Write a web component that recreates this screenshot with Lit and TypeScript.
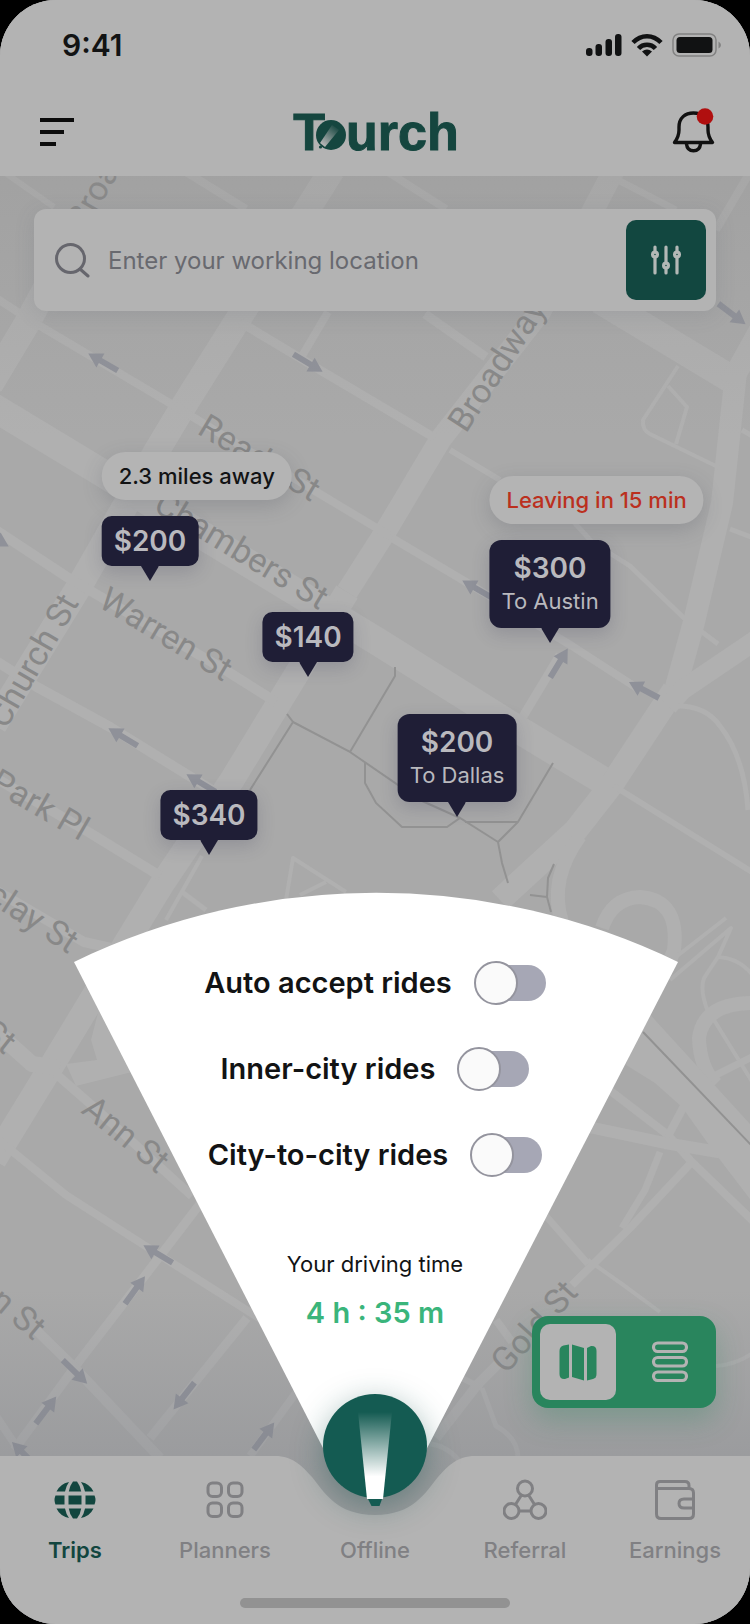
import { LitElement, html, svg, css, nothing } from "lit";
import { customElement, state } from "lit/decorators.js";

interface Pin {
  x: number;
  y: number;
  price: string;
  to?: string;
  note?: string;
  urgent?: boolean;
}

/* Positions are percentages of the map area. */
const PINS: Pin[] = [
  { x: 20, y: 31.64, price: "$200", note: "2.3 miles away" },
  { x: 41.07, y: 39.14, price: "$140" },
  { x: 73.34, y: 36.48, price: "$300", to: "To Austin", note: "Leaving in 15 min", urgent: true },
  { x: 60.94, y: 50.08, price: "$200", to: "To Dallas" },
  { x: 27.87, y: 53.05, price: "$340" },
];

/* Streets: [stroke width, path]. */
const STREETS: [number, string][] = [
  [26, "M332 170 L183 407 L156 452 L80 585 L-6 725"],
  [26, "M60 262 L26 325 L-10 385"],
  [22, "M614 170 L540 312 L440 440 L384 534 L347 592"],
  [25, "M347 592 L288 688 L232 780 L162 884 L112 966 L54 1062 L-6 1160"],
  [28, "M-10 405 L104 474 L210 540 L375 640 L506 722 L612 786"],
  [28, "M600 300 L736 382"],
  [22, "M736 372 L722 503 L694 622 L674 694"],
  [22, "M730 384 L760 330"],
  [24, "M674 690 L612 784 L576 830 L500 900"],
  [20, "M756 640 L682 690 L668 706"],
  [14, "M580 836 Q548 880 562 922"],
  [6, "M4 172 L54 207"],
  [8, "M186 172 L246 209"],
  [8, "M388 172 L446 209"],
  [7, "M614 178 L676 210"],
  [8, "M750 172 L716 230"],
  [8, "M-10 294 L30 320 L173 405 L320 494 L390 536"],
  [9, "M240 322 L325 373 L435 438"],
  [8, "M328 312 L302 356"],
  [9, "M425 314 L486 357"],
  [6, "M450 450 L500 480"],
  [8, "M392 538 L466 582 L572 646 L640 690"],
  [9, "M516 728 L560 655"],
  [5, "M572 520 L592 542 L630 566 L686 620 L718 644"],
  [4, "M678 366 L643 420 Q642 430 650 434 L720 468"],
  [4, "M668 386 L687 407 L676 444"],
  [5, "M742 430 L756 438"],
  [5, "M730 529 L756 539"],
  [10, "M-4 530 L67 577 L230 673 L276 702"],
  [10, "M-4 661 L37 687 L110 727 L212 790"],
  [10, "M-8 776 L90 833 L160 876"],
  [10, "M-8 888 L84 942 L120 950"],
  [16, "M-8 1028 L32 1064 L60 1068"],
  [9, "M56 1074 L95 1108 L192 1196"],
  [8, "M-4 1138 L66 1195 L147 1247 L270 1325"],
  [9, "M206 1196 L157 1260 L80 1360 L14 1450"],
  [10, "M36 1330 L73 1366 L160 1458"],
  [9, "M247 1318 L150 1438"],
  [8, "M298 1390 L250 1456"],
  [8, "M-4 1416 L24 1458"],
  [5, "M678 706 Q706 706 720 726 Q744 756 748 810"],
  [6, "M614 786 L752 872"],
  [14, "M602 928 Q612 898 640 897 Q680 900 674 950 L668 966"],
  [4, "M672 960 L726 918"],
  [4, "M670 980 L731 928 L718 957 L706 975 Q698 986 708 1012 L714 1020 L756 1088"],
  [4, "M718 957 Q742 958 756 980"],
  [14, "M756 1003 Q704 1002 699 1038 Q700 1068 716 1084"],
  [7, "M756 1055 L714 1076"],
  [8, "M608 1089 L668 1135 L690 1160 L756 1224"],
  [12, "M584 1126 L665 1143 L724 1153"],
  [8, "M684 1106 L668 1136"],
  [7, "M660 1152 L645 1190 L622 1228"],
  [8, "M690 1164 L630 1228 L572 1285"],
  [10, "M500 1362 L478 1384 L436 1438"],
  [7, "M546 1216 L588 1264"],
  [4, "M588 1260 L622 1284 L660 1312"],
  [8, "M496 1320 L512 1342"],
  [6, "M462 1378 L482 1388"],
  [5, "M482 1388 L496 1426 Q518 1438 518 1458"],
  [5, "M430 1444 Q448 1446 460 1462"],
  [4, "M716 1366 Q738 1364 754 1352"],
  [4, "M286 900 L293 858 L346 892 M300 895 L326 882"],
  [5, "M182 892 L206 910"],
  [4, "M202 856 L166 920"],
];

/* Wide carriageways, drawn as filled areas. */
const JUNCTIONS =
  "M640 1003 L655 1020 L760 1135 V1212 L714 1152 L682 1107 L655 1083 L626 1065 Z " +
  "M100 1005 L91 1040 L97 1060 L66 1064 L76 1086 L136 1071 L132 1040 Z";

const PATHWAYS =
  "M287 714 L293 722 L250 790 M293 722 L350 752 L395 676 V667 M350 752 L420 800 L460 818 " +
  "M365 763 V783 L376 803 L402 827 H447 L460 818 L498 842 L502 863 L508 883 " +
  "M498 842 L518 822 L553 763 M465 822 H518 M554 864 L548 878 L547 897 L551 912 M530 895 L547 897 " +
  "M643 1032 L752 1146";

/* One-way arrows: x, y, heading in degrees. */
const ARROWS: [number, number, number][] = [
  [103, 362, 210], [308, 363, 31], [732, 314, 37], [-6, 538, 30], [477, 589, 210],
  [559, 663, -59], [644, 690, 208], [123, 737, 211], [201, 783, 211], [158, 1254, 211],
  [135, 1290, -54], [75, 1372, 44], [46, 1410, -53], [184, 1396, 128], [264, 1436, -53],
  [24, 1454, 225],
];

/* Street names: x, y, heading, text. */
const NAMES: [number, number, number, string][] = [
  [85, 232, -60, "Broadway"], [466, 434, -57, "Broadway"], [196, 433, 31, "Reade St"],
  [152, 510, 31, "Chambers St"], [97, 606, 31, "Warren St"], [6, 730, -60, "Church St"],
  [-12, 788, 30, "Park Pl"], [-58, 872, 33, "Barclay St"], [-20, 1036, 38, "St"],
  [80, 1112, 39, "Ann St"], [-55, 1267, 40, "John St"], [506, 1375, -48, "Gold St"],
];

@customElement("city-map")
export class CityMap extends LitElement {
  static styles = css`
    :host { display: block; }
    svg { display: block; width: 100%; height: 100%; }
    .street { fill: none; stroke: #b0b0b0; stroke-linejoin: round; }
    .junction { fill: #b0b0b0; }
    .pathway { fill: none; stroke: #929292; stroke-width: 2; }
    .arrow { fill: #8f9199; }
    .name { font: 400 34px Roboto, sans-serif; fill: #888; }
  `;

  render() {
    return html`
      <svg viewBox="0 0 750 1624" preserveAspectRatio="xMidYMin slice" role="img" aria-label="Street map">
        <defs>
          <linearGradient id="top" x1="0" y1="0" x2="0" y2="1">
            <stop offset="0" stop-color="#8c8c8c" stop-opacity="0.25" />
            <stop offset="1" stop-color="#8c8c8c" stop-opacity="0" />
          </linearGradient>
          <linearGradient id="bottom" x1="0" y1="0" x2="0" y2="1">
            <stop offset="0" stop-color="#7d8087" stop-opacity="0" />
            <stop offset="1" stop-color="#7d8087" stop-opacity="0.35" />
          </linearGradient>
        </defs>
        <rect width="750" height="1624" fill="#a9a9a9" />
        ${STREETS.map(([w, d]) => svg`<path class="street" stroke-width=${w} d=${d} />`)}
        <path class="junction" d=${JUNCTIONS} />
        <path class="pathway" d=${PATHWAYS} />
        ${ARROWS.map(
          ([x, y, a]) => svg`<path class="arrow" transform="translate(${x} ${y}) rotate(${a})"
            d="M-17 -3 H3 V-8 L17 0 L3 8 V3 H-17 Z" />`,
        )}
        ${NAMES.map(
          ([x, y, a, t]) => svg`<text class="name" transform="translate(${x} ${y}) rotate(${a})">${t}</text>`,
        )}
        <rect y="176" width="750" height="260" fill="url(#top)" />
        <rect y="1290" width="750" height="180" fill="url(#bottom)" />
        <rect y="1470" width="750" height="154" fill="#7d8087" fill-opacity="0.35" />
      </svg>
    `;
  }
}

const signalIcon = html`
  <svg width="36" height="22" viewBox="0 0 36 22" fill="#111213">
    <rect x="0" y="14" width="6.500" height="8" rx="3" />
    <rect x="9.500" y="10" width="6.500" height="12" rx="3" />
    <rect x="19.500" y="5" width="6.500" height="17" rx="3" />
    <rect x="29" y="0" width="6.500" height="22" rx="3" />
  </svg>`;

const wifiIcon = html`
  <svg width="32" height="24" viewBox="0 0 32 24" fill="none" stroke="#111213" stroke-width="4.500">
    <path d="M2 9.500 C10 1 22 1 30 9.500" />
    <path d="M7.500 15.500 C12 10.500 20 10.500 24.500 15.500" />
    <path d="M16 23.500 L11 18.500 Q16 14.500 21 18.500 Z" fill="#111213" stroke="none" />
  </svg>`;

const batteryIcon = html`
  <svg width="50" height="24" viewBox="0 0 50 24">
    <rect x="1" y="1" width="43" height="22" rx="6" fill="none" stroke="#828282" stroke-width="1.500" />
    <rect x="4.500" y="4" width="36" height="16" rx="3.500" fill="#111213" />
    <path d="M46.500 8.500 Q49 10 49 12 Q49 14 46.500 15.500 Z" fill="#828282" />
  </svg>`;

const bellIcon = html`
  <svg class="bell" width="44" height="44" viewBox="0 0 44 44" fill="none" stroke="#111" stroke-width="3.400" stroke-linejoin="round" stroke-linecap="round">
    <path d="M2.500 32.500 C5.500 28.500 7 26 7 20 V17 C7 8 13 3 21.500 3 C30 3 36 8 36 17 V20 C36 26 37.500 28.500 40.500 32.500 Z" />
    <path d="M14.500 34 C15 38.500 17.500 40.800 21.500 40.800 C25.500 40.800 28 38.500 28.500 34" />
    <circle cx="33" cy="6.500" r="8.300" fill="#b00f0f" stroke="none" />
  </svg>`;

const logoDisc = html`
  <svg class="logo-disc" width="30" height="30" viewBox="0 0 30 30">
    <defs>
      <linearGradient id="ray" x1="5" y1="26" x2="21" y2="6" gradientUnits="userSpaceOnUse">
        <stop offset="0.100" stop-color="#b3b3b3" />
        <stop offset="0.900" stop-color="#b3b3b3" stop-opacity="0.100" />
      </linearGradient>
    </defs>
    <circle cx="15" cy="15" r="15" fill="#15463f" />
    <path d="M4 23 L16 5 L23 10 L9 27 Z" fill="url(#ray)" />
    <path d="M1 23 L7 28 L5 30 L0 28 Z" fill="#b3b3b3" />
    <circle cx="4.500" cy="27" r="1.600" fill="#15463f" />
  </svg>`;

const tripsIcon = html`
  <svg width="42" height="42" viewBox="0 0 42 42">
    <g fill="#12463f">
      <path d="M15 3 Q6 5 2.500 12.500 H11 Q12 7 15 3 Z" />
      <path d="M27 3 Q36 5 39.500 12.500 H31 Q30 7 27 3 Z" />
      <path d="M19 2.500 H23 Q26.500 7 27.200 12.500 H14.800 Q15.500 7 19 2.500 Z" />
      <path d="M1.500 16.500 H10.500 V25.500 H1.500 Q-0.500 21 1.500 16.500 Z" />
      <path d="M14.500 16.500 H27.500 V25.500 H14.500 Z" />
      <path d="M40.500 16.500 H31.500 V25.500 H40.500 Q42.500 21 40.500 16.500 Z" />
      <path d="M15 39 Q6 37 2.500 29.500 H11 Q12 35 15 39 Z" />
      <path d="M27 39 Q36 37 39.500 29.500 H31 Q30 35 27 39 Z" />
      <path d="M19 39.500 H23 Q26.500 35 27.200 29.500 H14.800 Q15.500 35 19 39.500 Z" />
    </g>
  </svg>`;

const plannersIcon = html`
  <svg width="42" height="42" viewBox="0 0 42 42" fill="none" stroke="#808083" stroke-width="3">
    <rect x="4" y="4" width="13.500" height="13.500" rx="4.500" />
    <rect x="24.500" y="4" width="13.500" height="13.500" rx="4.500" />
    <rect x="4" y="24" width="13.500" height="13.500" rx="4.500" />
    <rect x="24.500" y="24" width="13.500" height="13.500" rx="4.500" />
  </svg>`;

const referralIcon = html`
  <svg width="44" height="42" viewBox="0 0 44 42" fill="none" stroke="#808083" stroke-width="3">
    <circle cx="22" cy="9.500" r="7.500" />
    <circle cx="8.500" cy="32" r="7.500" />
    <circle cx="35.500" cy="32" r="7.500" />
    <path d="M18.500 16 L12.500 25.500 M25.500 16 L31.500 25.500 M16 32 H28" />
  </svg>`;

const earningsIcon = html`
  <svg width="42" height="42" viewBox="0 0 42 42" fill="none" stroke="#808083" stroke-width="3" stroke-linejoin="round">
    <path d="M2.500 9.500 V6 Q2.500 2.500 6 2.500 H31 Q35 2.500 35 6.500 V10" />
    <path d="M2.500 9.500 H35 Q39.500 9.500 39.500 14 V35 Q39.500 39.500 35 39.500 H7 Q2.500 39.500 2.500 35 Z" />
    <path d="M39.500 20 H30 Q25 20 25 24.500 Q25 29 30 29 H39.500" />
  </svg>`;

@customElement("app-root")
export class AppRoot extends LitElement {
  static styles = css`
    :host {
      display: block;
      background: #000;
      font-family: Inter, "Liberation Sans", sans-serif;
      color: #121314;
    }
    *, *::before, *::after { box-sizing: border-box; }
    button, input { font: inherit; color: inherit; margin: 0; padding: 0; border: 0; background: none; }
    button { cursor: pointer; display: grid; place-items: center; }
    a { color: inherit; text-decoration: none; }
    svg { display: block; flex: none; }

    .screen {
      position: relative;
      display: flex;
      flex-direction: column;
      min-height: 100vh;
      overflow: hidden;
      border-radius: 56px;
      background: #b3b3b3;
    }
    .backdrop { position: absolute; inset: 0; }

    .top { position: relative; background: #b3b3b3; }
    .status {
      display: flex;
      align-items: center;
      justify-content: space-between;
      height: 88px;
      padding: 2px 28px 0 62px;
    }
    .time { font-size: 30px; line-height: 36px; font-weight: 600; }
    .signals { display: flex; align-items: center; gap: 9px; }
    .toolbar {
      display: grid;
      grid-template-columns: 44px 1fr 44px;
      align-items: center;
      height: 88px;
      padding: 0 34px 0 40px;
    }
    .menu { justify-items: start; align-content: center; gap: 8px; height: 44px; }
    .bar { height: 4px; background: #0c0c0c; }
    .bar-long { width: 34px; }
    .bar-mid { width: 24px; }
    .bar-short { width: 16px; }
    .bell { overflow: visible; }
    .logo {
      display: flex;
      align-items: baseline;
      justify-content: center;
      margin: 0;
      padding-right: 4px;
      font: 700 52px/60px "Liberation Sans", Arial, sans-serif;
      color: #15463f;
      -webkit-text-stroke: 1px #15463f;
    }
    .logo-disc { margin-left: -9px; }

    .area {
      position: relative;
      flex: 1;
      display: flex;
      flex-direction: column;
      justify-content: space-between;
      padding: 33px 34px 48px;
    }
    .search {
      position: relative;
      z-index: 1;
      display: flex;
      align-items: center;
      gap: 18px;
      height: 102px;
      padding: 0 10px 0 20px;
      border-radius: 12px;
      background: #b3b3b3;
      box-shadow: 0 4px 20px rgba(90, 95, 110, 0.15);
    }
    .query { flex: 1; min-width: 0; height: 60px; outline: 0; font-size: 24px; }
    .query::placeholder { color: #68696f; opacity: 1; }
    .filter { width: 80px; height: 80px; border-radius: 10px; background: #124740; }

    .pin {
      position: absolute;
      display: flex;
      flex-direction: column;
      align-items: center;
      transform: translate(-50%, -100%);
    }
    .tag {
      position: relative;
      display: flex;
      flex-direction: column;
      align-items: center;
      justify-content: center;
      min-height: 50px;
      padding: 0 12px;
      border-radius: 10px;
      background: #1f1e36;
      color: #b9b9be;
      box-shadow: 0 6px 18px rgba(50, 52, 80, 0.2);
    }
    .tag-tall { min-height: 88px; border-radius: 12px; }
    .price { font-size: 28px; line-height: 34px; font-weight: 600; }
    .to { font-size: 22px; line-height: 32px; white-space: nowrap; }
    .tail { width: 18px; height: 15px; background: #1f1e36; clip-path: polygon(0 0, 100% 0, 50% 100%); }
    .note {
      position: absolute;
      left: 0;
      bottom: calc(100% + 16px);
      padding: 0 17px;
      border-radius: 24px;
      background: #b4b4b4;
      box-shadow: 0 6px 20px rgba(70, 72, 85, 0.22);
      font-size: 22px;
      line-height: 48px;
      font-weight: 500;
      white-space: nowrap;
    }
    .note-urgent { color: #bb301e; }

    .views {
      align-self: flex-end;
      display: flex;
      justify-content: space-between;
      width: 184px;
      padding: 8px;
      border-radius: 16px;
      background: #29855d;
      box-shadow: 0 12px 28px rgba(41, 133, 93, 0.3);
    }
    .view { width: 76px; height: 76px; border-radius: 10px; }
    .view-on { background: #b3b3b3; }

    .fan {
      position: absolute;
      z-index: 2;
      left: 50%;
      bottom: 127px;
      width: 604px;
      height: 604px;
      transform: translateX(-50%);
    }
    .fan-shape { position: absolute; inset: 0; overflow: visible; }
    .fan-body {
      position: relative;
      display: flex;
      flex-direction: column;
      align-items: center;
      padding-top: 68px;
    }
    .options { display: grid; justify-items: center; gap: 42px; margin-bottom: 71px; }
    .option { display: flex; align-items: center; gap: 22px; font-size: 29px; line-height: 44px; font-weight: 600; cursor: pointer; }
    .switch { appearance: none; position: relative; width: 72px; height: 44px; cursor: pointer; }
    .switch::before {
      content: "";
      position: absolute;
      inset: 4px 0 4px 8px;
      border-radius: 18px;
      background: #a6a7b5;
    }
    .switch::after {
      content: "";
      position: absolute;
      top: 0;
      left: 0;
      width: 44px;
      height: 44px;
      border: 2px solid #94949e;
      border-radius: 50%;
      background: #fafafa;
    }
    .switch:checked::before { inset: 4px 8px 4px 0; background: #3ab37c; }
    .switch:checked::after { left: 28px; }
    .caption { margin: 0; font-size: 22px; line-height: 32px; }
    .clock { margin: 15px 0 0; font-size: 29px; line-height: 36px; font-weight: 600; color: #3ab57b; }

    .nav { position: relative; height: 168px; }
    .nav-shape { position: absolute; inset: 0; display: flex; }
    .nav-side { flex: 1; background: #b3b3b3; }
    .tabs {
      position: relative;
      display: grid;
      grid-template-columns: repeat(5, 1fr);
      padding-top: 22px;
    }
    .tab {
      display: flex;
      flex-direction: column;
      align-items: center;
      justify-content: flex-end;
      gap: 14px;
      height: 87px;
      font-size: 22px;
      line-height: 30px;
      font-weight: 500;
      color: #808083;
    }
    .tab-on { color: #12463f; font-weight: 600; }
    .torch {
      position: absolute;
      z-index: 3;
      top: -62px;
      left: 50%;
      width: 104px;
      height: 104px;
      margin-left: -52px;
      border-radius: 50%;
      background: #145b52;
      box-shadow: 0 8px 32px rgba(20, 80, 75, 0.4);
    }
    .torch svg { overflow: visible; }
    .home {
      position: absolute;
      left: 50%;
      bottom: 16px;
      width: 270px;
      height: 10px;
      margin-left: -135px;
      border-radius: 5px;
      background: #929292;
    }
  `;

  @state() private view = "map";

  private renderPin(p: Pin) {
    return html`
      <div class="pin" style="left:${p.x}%;top:${p.y}%">
        ${p.note ? html`<div class="note ${p.urgent ? "note-urgent" : ""}">${p.note}</div>` : nothing}
        <div class="tag ${p.to ? "tag-tall" : ""}">
          <span class="price">${p.price}</span>
          ${p.to ? html`<span class="to">${p.to}</span>` : nothing}
        </div>
        <div class="tail"></div>
      </div>`;
  }

  private renderOption(id: string, label: string) {
    return html`
      <label class="option" for=${id}>
        ${label}<input class="switch" id=${id} type="checkbox" role="switch" />
      </label>`;
  }

  render() {
    const ink = (on: boolean) => (on ? "#29855d" : "#b3b3b3");
    return html`
      <div class="screen">
        <city-map class="backdrop"></city-map>

        <header class="top">
          <div class="status">
            <span class="time">9:41</span>
            <span class="signals">${signalIcon}${wifiIcon}${batteryIcon}</span>
          </div>
          <div class="toolbar">
            <button class="menu" aria-label="Menu">
              <span class="bar bar-long"></span>
              <span class="bar bar-mid"></span>
              <span class="bar bar-short"></span>
            </button>
            <h1 class="logo" aria-label="Tourch"><span>T</span>${logoDisc}<span>urch</span></h1>
            <button aria-label="Notifications">${bellIcon}</button>
          </div>
        </header>

        <main class="area">
          <form class="search">
            <svg width="36" height="36" viewBox="0 0 36 36" fill="none" stroke="#66666d" stroke-width="3">
              <circle cx="16.500" cy="16.500" r="14" />
              <path d="M26 27 L34 34" stroke-linecap="round" />
            </svg>
            <input class="query" type="text" aria-label="Working location" placeholder="Enter your working location" />
            <button class="filter" type="button" aria-label="Filters">
              <svg width="30" height="30" viewBox="0 0 30 30" fill="none" stroke="#b3b8b6" stroke-width="3.200" stroke-linecap="round">
                <path d="M4 2 V6 M4 12 V28 M15 2 V17 M15 24 V28 M26 2 V6 M26 12 V28" />
                <circle cx="4" cy="9.500" r="2.400" />
                <circle cx="15" cy="20.500" r="2.400" />
                <circle cx="26" cy="9.500" r="2.400" />
              </svg>
            </button>
          </form>

          ${PINS.map((p) => this.renderPin(p))}

          <div class="views" role="group" aria-label="View">
            <button class="view ${this.view === "map" ? "view-on" : ""}" aria-label="Map view" @click=${() => (this.view = "map")}>
              <svg width="38" height="38" viewBox="0 0 38 38" fill=${ink(this.view === "map")}>
                <path d="M10 1.500 V34.500 L6 36 Q0.500 36.500 0.500 31 V8 Q0.500 3.500 4.500 2.500 Z" />
                <path d="M13 1.500 L25 5 V37.500 L13 34 Z" />
                <path d="M28 5 L32 3 Q37.500 2.500 37.500 8 V31 Q37.500 35 34 36 L28 37.500 Z" />
              </svg>
            </button>
            <button class="view ${this.view === "list" ? "view-on" : ""}" aria-label="List view" @click=${() => (this.view = "list")}>
              <svg width="40" height="42" viewBox="0 0 40 42" fill="none" stroke=${ink(this.view === "list")} stroke-width="3.200">
                <rect x="3.500" y="2" width="33" height="8.500" rx="4.200" />
                <rect x="3.500" y="16.500" width="33" height="8.500" rx="4.200" />
                <rect x="3.500" y="31" width="33" height="8.500" rx="4.200" />
              </svg>
            </button>
          </div>
        </main>

        <section class="fan" aria-label="Ride options">
          <svg class="fan-shape" viewBox="0 0 604 604" fill="#fff">
            <path d="M1 69 A694 694 0 0 1 605 69 L334 594 H270 Z" />
          </svg>
          <div class="fan-body">
            <div class="options">
              ${this.renderOption("auto", "Auto accept rides")}
              ${this.renderOption("inner", "Inner-city rides")}
              ${this.renderOption("intercity", "City-to-city rides")}
            </div>
            <p class="caption">Your driving time</p>
            <p class="clock">4 h : 35 m</p>
          </div>
        </section>

        <nav class="nav">
          <div class="nav-shape">
            <div class="nav-side"></div>
            <svg width="200" height="168" viewBox="0 0 200 168" fill="#b3b3b3">
              <path d="M0 0 C18 0 27 10 37 21 C50 37 62 59 100 59 C138 59 150 37 163 21 C173 10 182 0 200 0 V168 H0 Z" />
            </svg>
            <div class="nav-side"></div>
          </div>
          <button class="torch" aria-label="Go online">
            <svg width="104" height="104" viewBox="0 0 104 104">
              <defs>
                <linearGradient id="beam" x1="0" y1="18" x2="0" y2="104" gradientUnits="userSpaceOnUse">
                  <stop offset="0" stop-color="#fff" stop-opacity="0" />
                  <stop offset="0.750" stop-color="#fff" />
                </linearGradient>
              </defs>
              <path d="M35 18 H69 L60 105 H44 Z" fill="url(#beam)" />
              <path d="M45 105 H59 L56.500 112 H48.500 Z" fill="#145b52" />
            </svg>
          </button>
          <div class="tabs">
            <a class="tab tab-on" href="#trips">${tripsIcon}Trips</a>
            <a class="tab" href="#planners">${plannersIcon}Planners</a>
            <a class="tab" href="#offline">Offline</a>
            <a class="tab" href="#referral">${referralIcon}Referral</a>
            <a class="tab" href="#earnings">${earningsIcon}Earnings</a>
          </div>
          <div class="home"></div>
        </nav>
      </div>
    `;
  }
}
